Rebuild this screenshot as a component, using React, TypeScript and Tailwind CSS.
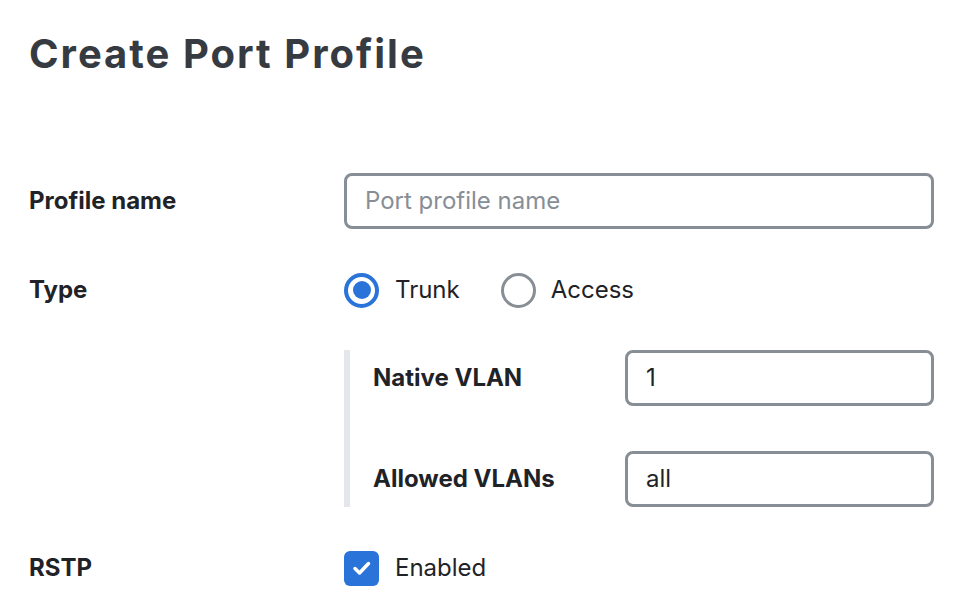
import React from "react";

export default function App() {
  return (
    <div className="min-h-[598px] w-[970px] bg-white pl-[29px] pr-[36px] pt-[30px] font-['Inter',sans-serif] text-[#1f2328]">
      <h1 className="font-['Inter',sans-serif] text-[40px] font-bold leading-[48px] tracking-[2px] text-[#363b42]">Create Port Profile</h1>

      <div className="mt-[95px] flex items-center">
        <div className="w-[315px] text-[24px] font-bold">Profile name</div>
        <div className="flex h-[56px] flex-1 items-center rounded-[8px] border-[3px] border-[#878e96] px-[18px] text-[24px] text-[#878e96]">
          Port profile name
        </div>
      </div>

      <div className="mt-[43px] flex items-center">
        <div className="w-[315px] text-[24px] font-bold">Type</div>
        <div className="flex items-center">
          <div className="flex h-[35px] w-[35px] items-center justify-center rounded-full border-[4px] border-[#2a73d9]">
            <div className="h-[18px] w-[18px] rounded-full bg-[#2a73d9]" />
          </div>
          <span className="ml-[16px] text-[24px]">Trunk</span>
          <div className="ml-[41px] h-[35px] w-[35px] rounded-full border-[3px] border-[#878e96]" />
          <span className="ml-[15px] text-[24px]">Access</span>
        </div>
      </div>

      <div className="mt-[42px] flex">
        <div className="w-[315px]" />
        <div className="flex flex-1 flex-col gap-[45px] border-l-[6px] border-[#e3e6ea] pl-[23px]">
          <div className="flex items-center">
            <div className="w-[252px] text-[24px] font-bold">Native VLAN</div>
            <div className="flex h-[56px] flex-1 items-center rounded-[8px] border-[3px] border-[#878e96] px-[18px] text-[24px]">1</div>
          </div>
          <div className="flex items-center">
            <div className="w-[252px] text-[24px] font-bold">Allowed VLANs</div>
            <div className="flex h-[56px] flex-1 items-center rounded-[8px] border-[3px] border-[#878e96] px-[18px] text-[24px]">all</div>
          </div>
        </div>
      </div>

      <div className="mt-[43px] flex items-center">
        <div className="w-[315px] text-[24px] font-bold">RSTP</div>
        <div className="flex items-center">
          <div className="h-[35px] w-[35px] rounded-[6px] bg-[#2a73d9]">
            <svg width="35" height="35" viewBox="0 0 35 35" fill="none" stroke="white" strokeWidth="3.5" strokeLinecap="round" strokeLinejoin="round">
              <path d="M11 17.5l4.5 4.5l9-9.5" />
            </svg>
          </div>
          <span className="ml-[16px] text-[24px]">Enabled</span>
        </div>
      </div>
    </div>
  );
}
